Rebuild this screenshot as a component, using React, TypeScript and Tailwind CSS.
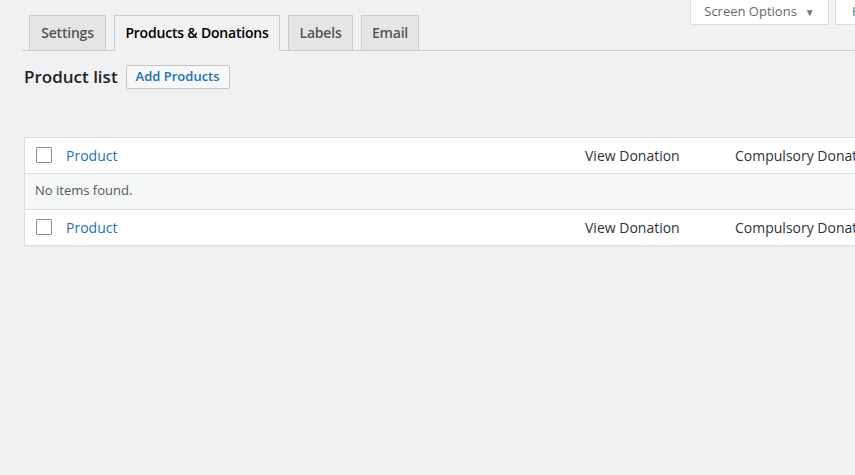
import React from "react";

export default function App() {
  const font = { fontFamily: '"Open Sans", "Noto Sans", sans-serif' };
  const tabs = [
    { t: "Settings", a: false, w: "w-[77px]" },
    { t: "Products & Donations", a: true, w: "w-[166px]" },
    { t: "Labels", a: false, w: "w-[65px]" },
    { t: "Email", a: false, w: "w-[58px]" },
  ];
  return (
    <div className="w-[855px] h-[475px] bg-[#f1f1f1] overflow-hidden relative" style={font}>
      <div className="absolute top-0 left-[690px] flex gap-[6px]">
        <div className="w-[139px] h-[25px] bg-white border border-t-0 border-[#dcdcde] flex items-center justify-center gap-[8px] text-[13px] text-[#646970]">
          <span>Screen Options</span>
          <span className="text-[10px] text-[#787c82]">▼</span>
        </div>
        <div className="w-[40px] h-[25px] bg-white border border-t-0 border-[#dcdcde] pl-[16px] text-[13px] text-[#646970] flex items-center">H</div>
      </div>

      <div className="pt-[15px] pl-[22px]">
        <div className="flex items-end border-b border-[#cccccc] pl-[7px] h-[36px]">
          {tabs.map((tab, i) => (
            <div
              key={tab.t}
              className={`${i > 0 ? "ml-[8px]" : ""} ${tab.w} shrink-0 h-[36px] -mb-px pb-[2px] flex items-center justify-center whitespace-nowrap text-[14px] tracking-[-0.2px] font-semibold border border-[#cccccc] ${
                tab.a ? "bg-[#f1f1f1] border-b-[#f1f1f1] text-black" : "bg-[#e5e5e5] text-[#555555]"
              }`}
            >
              {tab.t}
            </div>
          ))}
        </div>
      </div>

      <div className="flex items-center gap-[8px] pl-[24px] mt-[13px]">
        <h1 className="text-[17px] font-semibold text-[#1d2327]">Product list</h1>
        <button className="h-[24px] px-[9px] text-[13px] font-semibold text-[#2271b1] bg-[#f6f7f7] border border-[#c3c4c7] rounded-[2px] flex items-center">
          Add Products
        </button>
      </div>

      <div className="ml-[24px] mt-[47px] w-[840px] bg-white border border-[#dcdcde] shadow-[0_1px_1px_rgba(0,0,0,0.04)] text-[14px] overflow-hidden">
        <Row />
        <div className="h-[37px] bg-[#f6f7f7] border-y border-[#dcdcde] flex items-center pl-[10px] text-[13px] text-[#50575e]">
          No items found.
        </div>
        <Row />
      </div>
    </div>
  );
}

function Row() {
  return (
    <div className="h-[35px] flex items-center">
      <div className="w-[41px] shrink-0 pl-[11px] flex items-center">
        <div className="w-[16px] h-[16px] border border-[#8c8f94] bg-white rounded-[1px]"></div>
      </div>
      <div className="w-[519px] shrink-0 text-[#2271b1]">Product</div>
      <div className="w-[150px] shrink-0 text-[#2c3338]">View Donation</div>
      <div className="shrink-0 text-[#2c3338] whitespace-nowrap">Compulsory Donati</div>
    </div>
  );
}
